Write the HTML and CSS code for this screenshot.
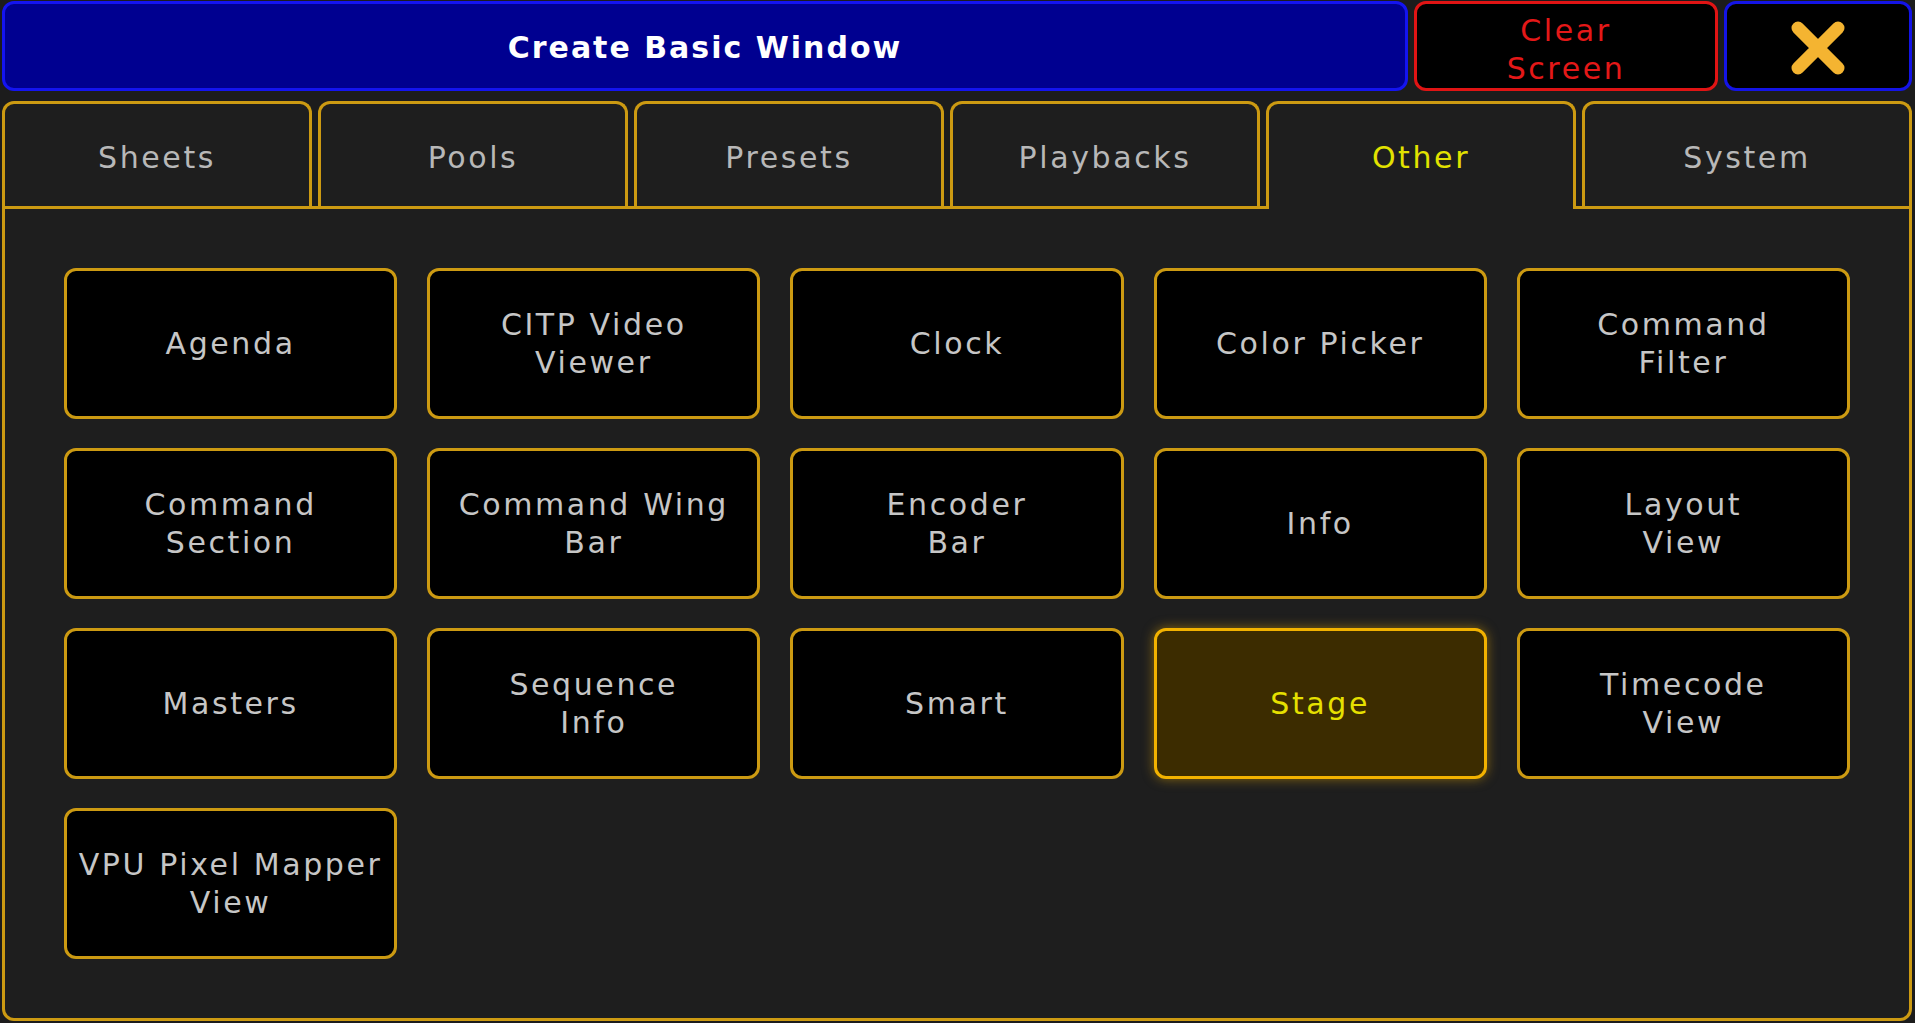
FILE: index.html
```html
<!DOCTYPE html>
<html lang="en">
<head>
  <meta charset="UTF-8" />
  <title>Create Basic Window</title>
  <link rel="stylesheet" href="styles.css">
</head>
<body>

  <div class="screen">
    <div class="topbar">
      <div class="title">Create Basic Window</div>
      <button class="clear-btn">Clear<br>Screen</button>
      <button class="close-btn" aria-label="Close">
        <svg width="56" height="56" viewBox="0 0 56 56">
          <path d="M8 8 L48 48 M48 8 L8 48" stroke="#f4b431" stroke-width="13" stroke-linecap="round" fill="none"/>
        </svg>
      </button>
    </div>

    <div class="tabs">
      <div class="tab">Sheets</div>
      <div class="tab">Pools</div>
      <div class="tab">Presets</div>
      <div class="tab">Playbacks</div>
      <div class="tab active">Other</div>
      <div class="tab wide">System</div>
    </div>

    <div class="panel">
      <div class="grid">
        <button class="win-btn">Agenda</button>
        <button class="win-btn">CITP Video<br>Viewer</button>
        <button class="win-btn">Clock</button>
        <button class="win-btn">Color Picker</button>
        <button class="win-btn">Command<br>Filter</button>

        <button class="win-btn">Command<br>Section</button>
        <button class="win-btn">Command Wing<br>Bar</button>
        <button class="win-btn">Encoder<br>Bar</button>
        <button class="win-btn">Info</button>
        <button class="win-btn">Layout<br>View</button>

        <button class="win-btn">Masters</button>
        <button class="win-btn">Sequence<br>Info</button>
        <button class="win-btn">Smart</button>
        <button class="win-btn selected">Stage</button>
        <button class="win-btn">Timecode<br>View</button>

        <button class="win-btn">VPU Pixel Mapper<br>View</button>
      </div>
    </div>
  </div>

</body>
</html>
```

FILE: styles.css
```css
* {
  box-sizing: border-box;
}
body {
  margin: 0;
  background: #1c1c1c;
  font-family: "DejaVu Sans", sans-serif;
  color: #c4c4c4;
}
.screen {
  padding: 1px 3px 3px 2px;
  height: 1023px;
  display: flex;
  flex-direction: column;
}

/* top title bar */
.topbar {
  display: flex;
  gap: 6px;
  height: 95px;
}
.title {
  flex: 1;
  background: #000090;
  border: 3px solid #1414f0;
  border-radius: 12px;
  color: #fff;
  font-weight: bold;
  font-size: 30px;
  letter-spacing: 2px;
  display: flex;
  align-items: center;
  justify-content: center;
  padding-top: 2px;
}
button {
  font-family: inherit;
  cursor: pointer;
}
.clear-btn {
  width: 304px;
  background: #000;
  border: 3px solid #e01414;
  border-radius: 12px;
  color: #e41818;
  font-size: 30px;
  letter-spacing: 2.6px;
  line-height: 38px;
  padding: 8px 0 0;
}
.close-btn {
  width: 188px;
  background: #000;
  border: 3px solid #1414e6;
  border-radius: 12px;
  display: flex;
  align-items: center;
  justify-content: center;
  padding: 4px 0 0;
}
.close-btn svg {
  filter: blur(0.6px);
}

/* tab strip */
.tabs {
  display: flex;
  gap: 6px;
  margin-top: 10px;
  height: 105px;
}
.tab {
  width: 310px;
  background: #1e1e1e;
  border: 3px solid #cc9a12;
  border-bottom: none;
  border-radius: 12px 12px 0 0;
  display: flex;
  align-items: center;
  justify-content: center;
  padding-top: 4px;
  font-size: 30px;
  letter-spacing: 2.6px;
  color: #b8b8b8;
}
.tab.wide {
  flex: 1;
}
.tab.active {
  position: relative;
  z-index: 1;
  height: 108px;
  padding-bottom: 3px;
  color: #e2e200;
}

/* window type buttons */
.panel {
  flex: 1;
  background: #1e1e1e;
  border: 3px solid #cc9a12;
  border-radius: 0 0 12px 12px;
  padding: 59px;
}
.grid {
  display: grid;
  grid-template-columns: repeat(5, 1fr);
  grid-auto-rows: 151px;
  gap: 29px 30px;
}
.win-btn {
  background: #000;
  border: 3px solid #cc9a12;
  border-radius: 12px;
  color: #c6c6c6;
  font-size: 30px;
  letter-spacing: 2.6px;
  line-height: 38px;
  padding: 0;
}
.win-btn.selected {
  background: #3c2c00;
  border-color: #f2b200;
  color: #e6e000;
  box-shadow: 0 0 12px rgba(242, 178, 0, 0.5);
}
```
